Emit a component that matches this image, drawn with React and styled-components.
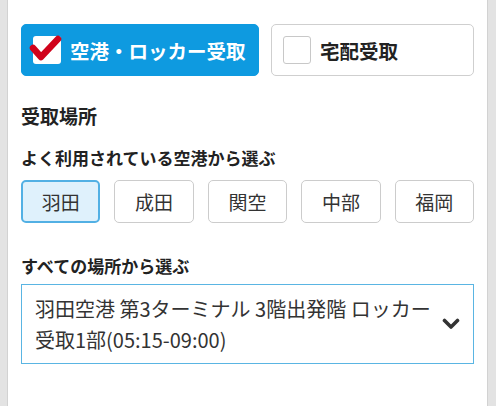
import React, { useState } from 'react';
import styled, { createGlobalStyle } from 'styled-components';

const GlobalStyle = createGlobalStyle`
  html, body {
    margin: 0;
    padding: 0;
    background: #e3e3e3;
  }
  body {
    font-family: "Noto Sans CJK JP", "Noto Sans", sans-serif;
    color: #222;
  }
`;

const Panel = styled.div`
  box-sizing: border-box;
  margin-left: 7px;
  width: 481px;
  min-height: 406px;
  background: #fff;
  border-left: 1px solid #d2d2d2;
  border-right: 1px solid #d2d2d2;
  padding: 24px 13px 0;
`;

const TabRow = styled.div`
  display: grid;
  grid-template-columns: 238px 1fr;
  gap: 12px;
`;

const Tab = styled.button`
  box-sizing: border-box;
  display: flex;
  align-items: center;
  gap: 9px;
  min-width: 0;
  height: 52px;
  padding: 0 10px;
  border-radius: 5px;
  font-family: inherit;
  font-size: 19.5px;
  font-weight: 700;
  white-space: nowrap;
  cursor: pointer;
  background: ${({ $active }) => ($active ? '#0e9ae0' : '#fff')};
  color: ${({ $active }) => ($active ? '#fff' : '#222')};
  border: 1px solid ${({ $active }) => ($active ? '#0e9ae0' : '#cfcfcf')};
`;

const Box = styled.span`
  position: relative;
  box-sizing: border-box;
  flex: none;
  width: 28px;
  height: 28px;
  margin-left: 1px;
  border-radius: 3px;
  background: #fff;
  border: ${({ $checked }) => ($checked ? 'none' : '1px solid #c8c8c8')};
`;

const Tick = styled.svg`
  position: absolute;
  left: -4px;
  top: -4px;
  overflow: visible;
`;

const Heading = styled.h2`
  margin: 26px 0 0;
  font-size: 19px;
  line-height: 28px;
  font-weight: 700;
  color: #222;
`;

const SubLabel = styled.h3`
  margin: ${({ $top }) => $top}px 0 0;
  font-size: 17px;
  line-height: 24px;
  font-weight: 700;
  color: #222;
`;

const AirportRow = styled.div`
  display: grid;
  grid-template-columns: repeat(5, 1fr);
  gap: 14px;
  margin-top: 10px;
`;

const Airport = styled.button`
  box-sizing: border-box;
  height: 43px;
  border-radius: 5px;
  font-family: inherit;
  font-size: 19px;
  color: #333;
  cursor: pointer;
  background: ${({ $active }) => ($active ? '#dff1fc' : '#fff')};
  border: ${({ $active }) => ($active ? '2px solid #52b0e4' : '1px solid #cccccc')};
`;

const Select = styled.div`
  box-sizing: border-box;
  display: flex;
  align-items: center;
  justify-content: space-between;
  margin-top: 6px;
  height: 80px;
  padding: 0 13px;
  border: 1px solid #5ab5e3;
  cursor: pointer;
`;

const SelectText = styled.span`
  font-size: 20px;
  line-height: 31px;
  color: #333;
  max-width: 396px;
`;

const Chevron = () => (
  <svg width="18" height="12" viewBox="0 0 18 12">
    <polyline points="2.5,2.5 9,9 15.5,2.5" fill="none" stroke="#333" strokeWidth="3.6" strokeLinecap="round" strokeLinejoin="round" />
  </svg>
);

const airports = ['羽田', '成田', '関空', '中部', '福岡'];

const App = () => {
  const [mode, setMode] = useState('airport');
  const [airport, setAirport] = useState('羽田');

  return (
    <>
      <GlobalStyle />
      <Panel>
        <TabRow>
          <Tab $active={mode === 'airport'} onClick={() => setMode('airport')}>
            <Box $checked={mode === 'airport'}>
              {mode === 'airport' && (
                <Tick width="32" height="32" viewBox="0 0 32 32">
                  <polyline points="4,16 12,25 29,7" fill="none" stroke="#d0021b" strokeWidth="6.5" strokeLinecap="round" strokeLinejoin="round" />
                </Tick>
              )}
            </Box>
            空港・ロッカー受取
          </Tab>
          <Tab $active={mode === 'home'} onClick={() => setMode('home')}>
            <Box $checked={mode === 'home'} />
            宅配受取
          </Tab>
        </TabRow>

        <Heading>受取場所</Heading>
        <SubLabel $top={16}>よく利用されている空港から選ぶ</SubLabel>
        <AirportRow>
          {airports.map((name) => (
            <Airport key={name} $active={airport === name} onClick={() => setAirport(name)}>
              {name}
            </Airport>
          ))}
        </AirportRow>

        <SubLabel $top={31}>すべての場所から選ぶ</SubLabel>
        <Select>
          <SelectText>羽田空港 第3ターミナル 3階出発階 ロッカー受取1部(05:15-09:00)</SelectText>
          <Chevron />
        </Select>
      </Panel>
    </>
  );
};

export default App;
